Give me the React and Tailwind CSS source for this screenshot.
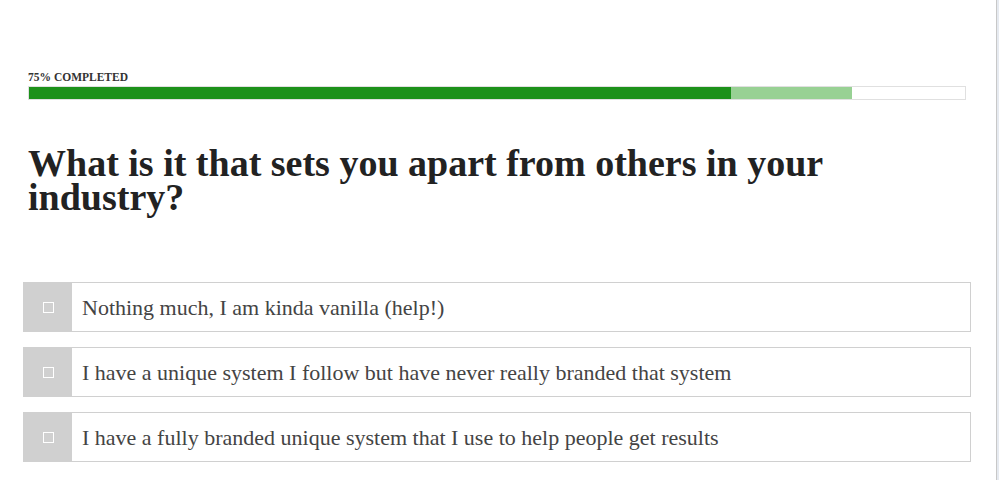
const options = [
  'Nothing much, I am kinda vanilla (help!)',
  'I have a unique system I follow but have never really branded that system',
  'I have a fully branded unique system that I use to help people get results',
];

function OptionRow({ label }) {
  return (
    <button className="flex h-[50px] w-full items-stretch border border-[#d0d0d0] bg-white text-left">
      <span className="flex w-[48px] shrink-0 items-center justify-center bg-[#d0d0d0]">
        <span className="h-[11px] w-[11px] border border-white" />
      </span>
      <span className="flex items-center pl-[10px] text-[22px] text-[#444]">{label}</span>
    </button>
  );
}

export default function App() {
  return (
    <div className="flex h-screen w-full bg-white" style={{ fontFamily: '"Liberation Serif", serif' }}>
      <div className="flex-1 pl-[23px] pr-[25px] pt-[70px]">
        <div className="mx-[5px]">
          <div className="text-[11.5px] font-bold leading-[14px] text-[#333]">75% COMPLETED</div>
          <div className="mt-[2px] flex h-[14px] w-full border border-[#e0e0e0] bg-white">
            <div className="h-full w-[75%] bg-[#1c911a]" />
            <div className="h-full w-[12.9%] bg-[#98d194]" />
          </div>
          <h1 className="mt-[46px] max-w-[850px] text-[38px] font-bold leading-[34px] text-[#222]">
            What is it that sets you apart from others in your industry?
          </h1>
        </div>
        <div className="mt-[68px] space-y-[15px]">
          {options.map((o) => (
            <OptionRow key={o} label={o} />
          ))}
        </div>
      </div>
      <div className="w-[3px] border-l border-[#c8c8c8] bg-[#e6eaf0]" />
    </div>
  );
}
